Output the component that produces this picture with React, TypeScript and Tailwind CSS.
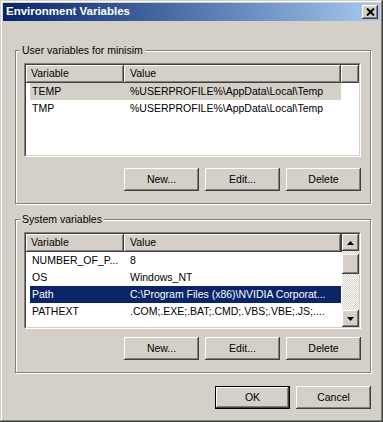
import React from "react";

const raised =
  "bg-[#d4d0c8] shadow-[inset_-1px_-1px_#404040,inset_1px_1px_#fff,inset_-2px_-2px_#808080,inset_2px_2px_#d4d0c8]";

const btn = `h-[23px] w-[75px] flex items-center justify-center text-black ${raised}`;

type Row = { name: string; value: string; sel?: "gray" | "blue" };

const userRows: Row[] = [
  { name: "TEMP", value: "%USERPROFILE%\\AppData\\Local\\Temp", sel: "gray" },
  { name: "TMP", value: "%USERPROFILE%\\AppData\\Local\\Temp" },
];

const sysRows: Row[] = [
  { name: "NUMBER_OF_P...", value: "8" },
  { name: "OS", value: "Windows_NT" },
  { name: "Path", value: "C:\\Program Files (x86)\\NVIDIA Corporat...", sel: "blue" },
  { name: "PATHEXT", value: ".COM;.EXE;.BAT;.CMD;.VBS;.VBE;.JS;...." },
];

function Arrow({ down }: { down?: boolean }) {
  return (
    <svg width="7" height="4" viewBox="0 0 7 4" className={down ? "rotate-180" : ""}>
      <path d="M3.5 0 L7 4 L0 4 Z" fill="#000" />
    </svg>
  );
}

function Scrollbar() {
  return (
    <div className="w-[17px] flex flex-col shrink-0">
      <div className={`h-[17px] flex items-center justify-center ${raised}`}>
        <Arrow />
      </div>
      <div className="flex-1 bg-[repeating-conic-gradient(#fff_0_25%,#d4d0c8_0_50%)] bg-[length:2px_2px] flex flex-col">
        <div className={`mt-[3px] h-[20px] ${raised}`} />
        <div className="flex-1" />
      </div>
      <div className={`h-[17px] flex items-center justify-center ${raised}`}>
        <Arrow down />
      </div>
    </div>
  );
}

function ListView({ rows, height, scroll }: { rows: Row[]; height: string; scroll?: boolean }) {
  return (
    <div className={`${height} border border-t-[#808080] border-l-[#808080] border-r-white border-b-white`}>
      <div className="h-full border border-t-[#404040] border-l-[#404040] border-r-[#d4d0c8] border-b-[#d4d0c8] bg-white flex overflow-hidden">
        <div className="flex-1 min-w-0 flex flex-col">
          {/* header */}
          <div className="h-[18px] flex shrink-0">
            <div className={`w-[98px] pl-[5px] flex items-center ${raised}`}>Variable</div>
            <div className={`w-[217px] pl-[6px] flex items-center ${raised}`}>Value</div>
            <div className={`flex-1 ${raised}`} />
          </div>
          {rows.map((r) => (
            <div key={r.name} className="h-[17px] flex pl-[4px] whitespace-nowrap">
              <div
                className={`w-[311px] flex items-center ${
                  r.sel === "blue"
                    ? "bg-[#0a246a] text-white"
                    : r.sel === "gray"
                    ? "bg-[#d4d0c8] text-black"
                    : "text-black"
                }`}
              >
                <div className="w-[94px] pl-[2px] overflow-hidden">{r.name}</div>
                <div className="pl-[6px] overflow-hidden">{r.value}</div>
              </div>
            </div>
          ))}
        </div>
        {scroll && <Scrollbar />}
      </div>
    </div>
  );
}

function Group({ title, rows, height, scroll, listGap, className }: {
  title: string; rows: Row[]; height: string; scroll?: boolean; listGap: string; className?: string;
}) {
  return (
    <fieldset className={`border border-[#808080] shadow-[1px_1px_0_#fff,inset_1px_1px_0_#fff] pl-[8px] pr-[9px] pb-[12px] min-w-0 ${className ?? ""}`}>
      <legend className="-ml-[4px] px-[2px] leading-[13px] bg-[#d4d0c8] text-black">{title}</legend>
      <div className="pt-[6px]">
        <ListView rows={rows} height={height} scroll={scroll} />
      </div>
      <div className={`${listGap} flex justify-end gap-[6px]`}>
        <button type="button" className={btn}>New...</button>
        <button type="button" className={btn}>Edit...</button>
        <button type="button" className={btn}>Delete</button>
      </div>
    </fieldset>
  );
}

export default function App() {
  return (
    <div className="w-[383px] h-[422px] bg-[#d4d0c8] p-[3px] font-['Liberation_Sans',Arial,sans-serif] text-[10.5px] text-black shadow-[inset_-1px_-1px_#404040,inset_1px_1px_#d4d0c8,inset_-2px_-2px_#808080,inset_2px_2px_#fff] overflow-hidden">
      {/* TITLE BAR */}
      <div className="h-[18px] flex items-center justify-between bg-linear-to-r from-[#0a246a] to-[#a6caf0] pl-[3px] pr-[2px]">
        <span className="text-white font-bold text-[11.5px]">Environment Variables</span>
        <button type="button" className={`w-[16px] h-[14px] flex items-center justify-center ${raised}`}>
          <svg width="9" height="8" viewBox="0 0 9 8">
            <path d="M1 0.5 L8 7.5 M8 0.5 L1 7.5" stroke="#000" strokeWidth="2" />
          </svg>
        </button>
      </div>

      {/* BODY */}
      <div className="pl-[12px] pr-[9px]">
        <Group
          className="mt-[23px]"
          title="User variables for minisim"
          rows={userRows}
          height="h-[94px]"
          listGap="mt-[11px]"
        />
        <Group
          className="mt-[9px]"
          title="System variables"
          rows={sysRows}
          height="h-[97px]"
          scroll
          listGap="mt-[8px]"
        />

        {/* FOOTER */}
        <div className="mt-[13px] flex justify-end gap-[6px]">
          <button
            type="button"
            className="h-[23px] w-[75px] flex items-center justify-center bg-[#d4d0c8] shadow-[inset_0_0_0_1px_#000,inset_-2px_-2px_#404040,inset_2px_2px_#fff,inset_-3px_-3px_#808080]"
          >
            OK
          </button>
          <button type="button" className={btn}>Cancel</button>
        </div>
      </div>
    </div>
  );
}
